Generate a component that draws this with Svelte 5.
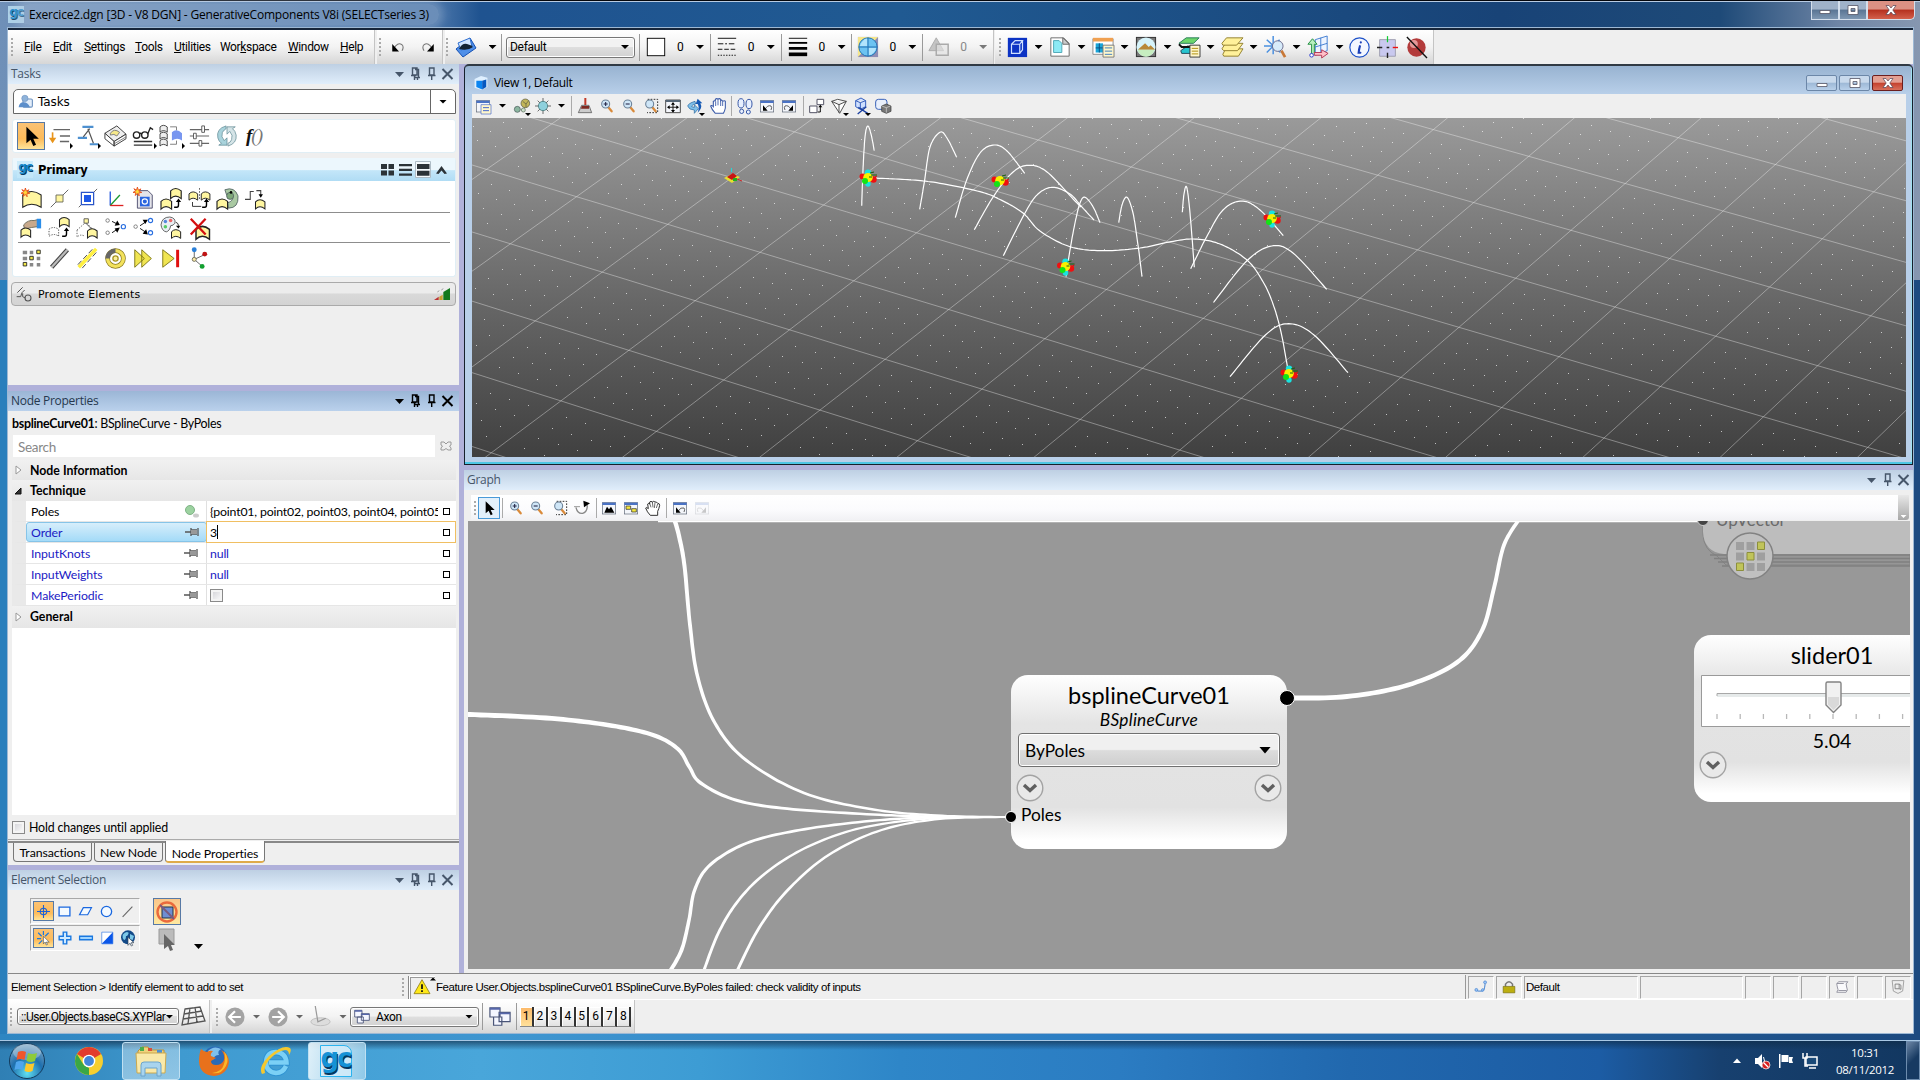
<script>
  // ---------- icon artwork, all on a 24 x 24 grid ----------
  const surf = (x, y, s = 1, f = '#fff6a0') =>
    `<path transform="translate(${x} ${y}) scale(${s})" d="M0 3Q5-2 11 3V11Q5 6 0 11Z" fill="${f}" stroke="#222" stroke-width="1.2"/>`;
  const lens = (inner) =>
    `<path d="M14 14l5 6" stroke="#d98a3a" stroke-width="3.4" stroke-linecap="round"/><circle cx="10" cy="9" r="6" fill="#cfe6f7" stroke="#6b8197" stroke-width="1.6"/>${inner}`;
  const win = (inner) =>
    `<rect x="2" y="4" width="20" height="17" fill="#f4f6fb" stroke="#5b6373"/><rect x="2" y="4" width="20" height="3.5" fill="#4a72c4"/>${inner}`;
  const star = (x, y) =>
    `<path transform="translate(${x} ${y})" d="M0-5L1.2-1.5 4-3 2-.3 5 1 1.7 1.5 2 5 0 2.4-2.5 4.5-1.8 1.4-5 1-2-.6-4-3.2-1-1.6Z" fill="#ffd83a" stroke="#e23b10" stroke-width=".9"/>`;
  const up = (x, y) => `<path d="M${x - 4} ${y + 9}h3q2 0 2-3v-4" fill="none" stroke="#000" stroke-width="1.6"/><path d="M${x - 2} ${y + 3}l3-4 3 4z"/>`;

  const icons = {
    level: '<path d="M2 14L16 3 22 13 9 22Z" fill="#4f8fe8" stroke="#1450b4"/><path d="M4 8L16 3 18 12 7 15Z" fill="#cfe4ff" stroke="#2f6fd0"/><path d="M5 14q3-6 8-5 4 1 6 3-5 4-14 2" fill="#123"/>',
    undo: '<path d="M5 14q5-9 11-5 3 3 0 8" fill="none" stroke="#777" stroke-width="1.4"/><path d="M3 8v10h9z"/>',
    redo: '<path d="M19 14q-5-9-11-5-3 3 0 8" fill="none" stroke="#777" stroke-width="1.4"/><path d="M21 8v10h-9z"/>',
    white: '<rect x="2.500" y="2.500" width="19" height="19" fill="#fff" stroke="#000"/>',
    style: '<g stroke="#000"><path d="M2 2.500h20"/><path d="M2 8.500h20" stroke-dasharray="6 2 2 2"/><path d="M2 14.500h20" stroke-dasharray="5 2"/><path d="M2 21h20" stroke-dasharray="1.500 1.500"/></g>',
    weight: '<path d="M2 2.500h20" stroke="#000"/><path d="M2 7.500h20" stroke="#000" stroke-width="2"/><path d="M2 13.500h20" stroke="#000" stroke-width="3"/><path d="M2 20h20" stroke="#000" stroke-width="4"/>',
    globe: '<path d="M1 1h22v22H1z" fill="#8d8db5"/><path d="M1 1h22L1 23z" fill="#f5e68c"/><circle cx="12" cy="12" r="10" fill="#6cc3f2" stroke="#1d6cae"/><path d="M12 2v20M2 12h20" stroke="#1d6cae"/><path d="M5 7q4-5 6-4v8H3zM13 13h8q-2 7-8 8z" fill="#c9efff" opacity=".75"/>',
    prio: '<path d="M9 2l8 14H1z" fill="#c4c4c4" stroke="#aaa"/><path d="M9 9h13v12H9z" fill="#e4e4e4" fill-opacity=".6" stroke="#aaa" stroke-width="1.600"/>',
    cube: '<path d="M2 2h21v21H2z" fill="#0c33c4"/><path d="M6 9h9v10H6zM6 9l4-4h8l-3 4M18 5v10l-3 4" fill="none" stroke="#cfe0ff" stroke-width="1.300"/>',
    page: '<path d="M2 2h14l6 6v14H2z" fill="#fff" stroke="#666"/><path d="M15 2l7 7h-7z" fill="#ccc" stroke="#666"/><path d="M5 5h6l3 3v10H5z" fill="#8deaf5" stroke="#4aa5b5"/>',
    table: '<path d="M1 3h22v17H1z" fill="#fff" stroke="#888"/><path d="M1 2h22v4H1z" fill="#f0a050"/><path d="M4 8h8v10H4z" fill="#1aa5d8"/><path d="M4 13h8M8 8v10" stroke="#0b4f80"/><path d="M12 10h12v13H12z" fill="#fff7cc" stroke="#777"/><path d="M14 13h8M14 16.500h8M14 20h8" stroke="#37b"/>',
    raster: '<path d="M1 1h22v22H1z" fill="#333"/><path d="M2 2h20v20H2z" fill="#777"/><circle cx="12" cy="12" r="10.400" fill="#d6f3fa"/><path d="M3 15l8-7 4 4 2-2 5 5z" fill="#b98838"/><path d="M2.500 15h19q-3 7.500-9.500 7.500T2.500 15" fill="#c7eec0"/>',
    models: '<path d="M3 16l7-5h13l-6 8H4z" fill="#26c4cf" stroke="#245"/><path d="M1 8l8-6h14l-6 6H3z" fill="#6cd66b" stroke="#275"/><path d="M1 9l3 3h11" fill="none" stroke="#111" stroke-width="2"/><path d="M13 10h11v13H13z" fill="#fff7cc" stroke="#333"/><path d="M15 13.500h7M15 16.500h7M15 19.500h7" stroke="#a80"/>',
    layers: '<g fill="#fff19a" stroke="#8d7b28"><path d="M2 20l3-6h19l-5 8H3z"/><path d="M1 14l4-6h19l-6 8H3z"/><path d="M1 8l5-6h18l-7 8H2z"/></g>',
    burst: '<path d="M10 0v20M0 11h18M3 4l15 14M17 4L3 18" stroke="#4a90e0" stroke-width="1.600"/><circle cx="15" cy="11" r="5.800" fill="#d7ebfa" stroke="#668"/><path d="M19 16l4 7" stroke="#c87838" stroke-width="3"/>',
    acs: '<path d="M9 4l13-4v16l-13 5zM15 2v16M9 12l13-4" fill="#edf4ff" stroke="#3a78d0"/><path d="M5 22V9H1l5-6 5 6H8v10" fill="#b8f0c0" stroke="#1b8b3a"/><path d="M8 18h8v-3l7 4-7 5v-3H8z" fill="#ffc0c8" stroke="#b03050"/><circle cx="5" cy="21" r="2" fill="#fff" stroke="#23c"/>',
    info: '<circle cx="12" cy="12" r="11" fill="#f3f7ff" stroke="#1b50c8" stroke-width="1.300"/><path d="M13.500 6v.2M12.500 10.500q-1 3-1.500 7.500h2" stroke="#1b40b8" stroke-width="2.400" fill="none" stroke-linecap="round"/>',
    target: '<path d="M3 3h18v19H3z" fill="#c9c9ef" stroke="#99a"/><path d="M12-1v7" stroke="#1c3" stroke-width="1.400"/><path d="M12 18v6M0 12h6M11 12h3" stroke="#222" stroke-width="1.600"/><path d="M18 12h6" stroke="#e11" stroke-width="1.600"/>',
    nosphere: '<circle cx="12" cy="12" r="10.500" fill="#b33b3b"/><circle cx="9" cy="8" r="4.500" fill="#f0b0b0" opacity=".8"/><path d="M1 0l23 24" stroke="#111" stroke-width="1.600"/>',
    person: '<rect x="8" y="8" width="15" height="13" rx="2" fill="#e4eefa" stroke="#6d92c0" stroke-width="1.800"/><circle cx="11" cy="7" r="5" fill="#8fb3da" stroke="#6d92c0"/><path d="M1 21q1-8 8-8t10 8z" fill="#5d8fcb"/>',
    arrow: '<path d="M7 2v18l4.500-4 3 7 3-1.500-3-6.500h6z"/>',
    listdn: '<path d="M6 5h18M13 12h11M13 18h10" stroke="#666" stroke-width="1.400"/><path d="M5 8v8" stroke="#e8941a" stroke-width="1.800"/><path d="M1 14h8l-4 6z" fill="#e8941a"/>',
    constr: '<path d="M7 2h12M2 14h10M15 21h9" stroke="#4d90d0" stroke-width="2.400"/><path d="M15 4l-7 9M13 4l6 16" stroke="#555" stroke-width="1.300"/>',
    book: '<path d="M1 9l13-8 10 9-13 8z" fill="#eee" stroke="#333"/><path d="M1 9v6l10 8v-5zM11 18v5l13-8v-5z" fill="#fff" stroke="#333"/><path d="M12 20l12-7" stroke="#777"/><path d="M7 9q4-6 10-1l-3 4q-3-3-7-1z" fill="#f5e88a" stroke="#777"/>',
    glasses: '<circle cx="5" cy="11" r="3.500" fill="none" stroke="#222" stroke-width="1.500"/><circle cx="14" cy="11" r="3.500" fill="none" stroke="#222" stroke-width="1.500"/><path d="M8 10q1-2 3 0M17 10l3-7 3 2" fill="none" stroke="#222" stroke-width="1.500"/><path d="M2 18h20M2 22h20" stroke="#333" stroke-width="1.500"/>',
    stack: surf(0, 0, .72, '#eee') + surf(0, 7.500, .72, '#eee') + surf(0, 15, .72, '#eee') + '<path d="M11 2h7v4M11 21h7v-4" stroke="#777" fill="none"/><path d="M13 8q5-5 11 1v8q-5-4-11 0z" fill="#7896f0"/>',
    sliders: '<path d="M2 5h21M2 12h21M2 20h21" stroke="#666" stroke-width="1.200"/><path d="M15 1h3v7h-3zM6 9h3v6H6zM12 17h3v6h-3z" fill="#fff" stroke="#555"/>',
    cycle: '<path d="M11 1Q0 4 2 14q1 4 4 6l-3 2h9v-8l-3 3Q5 13 7 8q2-3 4-4z" fill="#a9d3dc" stroke="#628a94" stroke-width=".800"/><path d="M13 23q10-3 9-12-1-5-4-7l3-2h-9v8l3-3q4 4 2 9-1 3-4 4z" fill="#d5e4e7" stroke="#628a94" stroke-width=".800"/>',
    surfnew: '<path d="M2 8Q12 0 23 8V22Q12 15 2 22Z" fill="#fff6a0" stroke="#222" stroke-width="1.200"/>' + star(5, 5),
    ptline: '<path d="M2 22L22 2" stroke="#555"/><path d="M8 8h8v8H8z" fill="#fff6a0" stroke="#665"/>',
    ptblue: '<path d="M2 22L23 1" stroke="#555"/><path d="M5 5h14v14H5z" fill="#fff" stroke="#2a55c8" stroke-width="1.400"/><path d="M8 8h8v8H8z" fill="#1e58e8"/>',
    axes: '<path d="M6 4v16" stroke="#2255dd" stroke-width="1.500"/><path d="M6 20L17 8" stroke="#1a9a30" stroke-width="1.500"/><path d="M6 20h15" stroke="#d22" stroke-width="1.500"/>',
    docnew: '<path d="M5 3h12l5 5v15H5z" fill="#e4e4ea" stroke="#446"/><path d="M8 10h11v11H8z" fill="#2a65e0"/><circle cx="13.500" cy="15.500" r="3" fill="none" stroke="#fff" stroke-width="1.300"/>' + star(5, 4),
    surfup: surf(11, 0, 1.1) + surf(0, 12, 1.1) + up(19, 13),
    surfmir: surf(0, 4, .9) + surf(14, 4, .9) + '<path d="M12 0v14" stroke="#555" stroke-dasharray="2 1.500"/><path d="M4 16v5h10" stroke="#222" fill="none"/>' + up(19, 13),
    radar: '<path d="M9 2q11-4 15 7 1 14-11 14l-1-6q7-2 6-8-4-5-7-1z" fill="#a9c9a2" stroke="#566"/><circle cx="15" cy="9" r="4" fill="#7ea878" stroke="#566"/><circle cx="16" cy="5" r="1.500"/>' + surf(0, 12, 1.1),
    branch: '<path d="M0 13h6V4h4M13 3h5v5" fill="none" stroke="#444" stroke-width="1.200"/><path d="M15.500 7h5L18 11z"/>' + surf(12, 13, .98),
    hand: '<path d="M3 9q5-6 12-5l4-1v8l-7 1-8 2z" fill="#c8a98c" stroke="#665"/><path d="M18 2h5v11h-5z" fill="#2a8de8"/>' + surf(0, 12, 1),
    ghost: surf(12, 0, 1) + '<path d="M0 14q5-4 11 0v8q-5-4-11 0z" fill="none" stroke="#444" stroke-dasharray="1.500 1.500"/>' + up(19, 13),
    ghost2: '<path d="M0 15l10-9 8 8M0 15v8q4-4 9-1" fill="none" stroke="#555" stroke-dasharray="1.500 1.500"/><path d="M10 7l7 7" stroke="#444"/><path d="M8 2h5v5H8z" fill="#fff6a0" stroke="#555"/>' + surf(12, 13, 1),
    merge: '<g fill="none" stroke="#777"><circle cx="3" cy="4" r="2"/><circle cx="3" cy="18" r="2"/></g><circle cx="21" cy="11" r="2.400" fill="none" stroke="#2a6fe0" stroke-width="1.300"/><path d="M8 5l6 3M8 18l6-4" stroke="#000"/><path d="M11 10l6-1-3-5zM11 13l6-1-3 6z"/>',
    split: '<circle cx="3" cy="11" r="2" fill="none" stroke="#777"/><g fill="none" stroke="#2a6fe0" stroke-width="1.300"><circle cx="20" cy="4" r="2.400"/><circle cx="20" cy="18" r="2.400"/></g><path d="M8 10l6-4M8 13l6 4" stroke="#000"/><path d="M11 3l6 0-3 5zM11 19l6 1-2-6z"/>',
    palette: '<path d="M0 9q1-9 10-9 7 1 6 7-2 3-5 3-1 6-5 7-5-1-6-8z" fill="#e9eef3" stroke="#555"/><circle cx="5" cy="5" r="2" fill="#58d"/><circle cx="11" cy="4" r="2" fill="#e66"/><circle cx="5" cy="11" r="2" fill="#5c6"/><path d="M17 6q3 1 3 4" fill="none" stroke="#222"/><path d="M17 10h5l-2 3z"/>' + surf(12, 14, .95),
    del: surf(8, 10, 1.4) + '<path d="M2 2l17 18M19 2L2 20" stroke="#d40f0f" stroke-width="2.600"/>',
    gridpts: '<g fill="#888"><path d="M2 3h5v4H2zM10 3h4v4h-4zM2 10h5v4H2zM18 10h4v4h-4zM10 17h4v4h-4zM18 17h4v4h-4z"/></g><g fill="#f4e94a" stroke="#222"><path d="M18 2.500h4v4h-4zM10 9.500h4v4h-4zM2.500 16.500h4v4h-4z"/></g>',
    bar: '<path d="M3 22L21 2" stroke="#444" stroke-width="5"/><path d="M3 22L21 2" stroke="#bbb" stroke-width="2.600"/>',
    bardash: '<path d="M2 22L22 1" stroke="#fff040" stroke-width="4"/><path d="M1 19L18 1M6 23L23 4" stroke="#333" stroke-dasharray="6 3"/>',
    ring: '<circle cx="12" cy="12" r="9" fill="none" stroke="#8a7a20" stroke-width="5.500"/><circle cx="12" cy="12" r="9" fill="none" stroke="#f3e25c" stroke-width="3.800"/><path d="M3 12a9 9 0 0 1 9-9" fill="none" stroke="#666" stroke-width="5"/><circle cx="12" cy="12" r="3" fill="#f9ef9a" stroke="#a89525" stroke-width="1.500"/>',
    ff: '<path d="M2 2l11 10-11 10zM10 2l11 10-11 10z" fill="#f0e552" stroke="#77700f"/>',
    step: '<path d="M2 2l13 10-13 10z" fill="#f0e552" stroke="#77700f"/><path d="M19 2v20" stroke="#e01010" stroke-width="3.400"/>',
    tree: '<path d="M6 13V4M6 13l11-5M6 13l8 7" stroke="#555"/><circle cx="6" cy="2" r="2.800" fill="#2a7fd8"/><circle cx="18" cy="7" r="2.800" fill="#c01414"/><circle cx="15" cy="21" r="2.800" fill="#12a030"/><circle cx="6" cy="13" r="2.300" fill="#fbe9a8" stroke="#665"/>',
    promote: '<path d="M2 10l8-8M1 16h6l2-6 4-4" stroke="#555" stroke-width="1.500" fill="none"/><circle cx="18" cy="18" r="4.500" fill="none" stroke="#555" stroke-width="1.600"/><path d="M10 11v5l4 2" stroke="#555" stroke-width="1.500" fill="none"/>',
    steps: '<path d="M0 21l7-5v5z" fill="#b33"/><path d="M8 21v-5l5-3v8z" fill="#c8a030"/><path d="M14 21V9l10-6v18z" fill="#147a1e"/><path d="M5 9l3-2M11 6l3-2" stroke="#777"/>',
    viewattr: win('<path d="M9 10h15v14H9z" fill="#fff7cc" stroke="#46c"/><path d="M12 14.500h9M12 19h9" stroke="#46c" stroke-width="1.500"/>'),
    gems: '<circle cx="5" cy="17" r="4.500" fill="#8cb6a0" stroke="#455"/><circle cx="17" cy="8" r="6.500" fill="#c2b65a" stroke="#554"/><path d="M13 5l5 4 4-5M18 9v5" stroke="#554" fill="none"/><circle cx="14" cy="18" r="3" fill="#c9dfc9" stroke="#565"/>',
    sun: '<path d="M12 0v24M0 12h24M4 4l16 16M20 4L4 20" stroke="#555" stroke-width="1.300"/><circle cx="12" cy="12" r="7" fill="#8ed0dc" stroke="#366"/>',
    brush: '<path d="M11 0h3v11h-3z" fill="#c23a2a"/><path d="M7 11h11l4 11H2z" fill="#ccc" stroke="#444"/><path d="M7 12h11v4H6z" fill="#7e2a22"/>',
    zin: lens('<path d="M7 9h6M10 6v6" stroke="#224" stroke-width="1.600"/>'),
    zout: lens('<path d="M7 9h6" stroke="#224" stroke-width="1.600"/>'),
    zwin: '<path d="M7 2h15v20H6" fill="none" stroke="#333" stroke-width="1.500" stroke-dasharray="2.500 2"/>' + lens(''),
    fit: '<path d="M1 3h22v19H1z" fill="#f4f6fb" stroke="#444" stroke-width="1.400"/><path d="M1 3h22v3H1z" fill="#567"/><path d="M12 8v12M5 14h14" stroke="#222" stroke-width="1.600"/><path d="M9 10l3-4 3 4zM9 18l3 4 3-4zM7 11l-4 3 4 3zM17 11l4 3-4 3z"/>',
    rotate: '<path d="M12 5Q2 8 1 12q2 6 10 6v5l6-7-6-6v4q-4 0-4-2 2-3 6-3z" fill="#7fc0ea" stroke="#25639c"/><path d="M16 22q8-7 4-14h3l-7-7-3 8h3q3 5 0 13z" fill="#1659b4"/>',
    pan: '<path d="M8 23Q3 18 1 12q1-2 4 1V5q2-2 3 0V2q2-2 4 0 2-2 4 0v2q2-2 3 1 3-2 4 0v10q-1 5-3 8z" fill="#fff" stroke="#3a5aa8" stroke-width="1.600"/><path d="M8.500 5v7M12 3v8M16 4v8M19 6v6" stroke="#3a5aa8" stroke-width="1.300"/>',
    panb: '<path d="M8 23Q3 18 1 12q1-2 4 1L4 6q2-2 3 0L7 3q2-2 4 0 2-2 4 0 2-1 4 2 3 0 3 3-1 5-3 9v6z" fill="#fff" stroke="#222" stroke-width="1.400"/><path d="M7 5l2 6M11 3l1 8M15 4l-1 8M19 6l-2 6" stroke="#222"/>',
    walk: '<g fill="#e8f0ff" stroke="#3a5aa8" stroke-width="1.500"><ellipse cx="6" cy="8" rx="4.500" ry="7"/><ellipse cx="7" cy="20" rx="3" ry="3.300"/><ellipse cx="18" cy="9" rx="4.500" ry="7"/><ellipse cx="17" cy="21" rx="3" ry="3"/></g>',
    vprev: win('<path d="M9 17q4-7 9-5 2 2 0 6" fill="none" stroke="#555" stroke-width="1.400"/><path d="M6 11v8h7z"/>'),
    vnext: win('<path d="M15 17q-4-7-9-5-2 2 0 6" fill="none" stroke="#555" stroke-width="1.400"/><path d="M18 11v8h-7z"/>'),
    copyv: '<path d="M1 12h11v10H1zM12 2h10v8h-10z" fill="#fff" stroke="#556" stroke-width="1.500"/><path d="M17 21v-8M13 21h4" stroke="#000" stroke-width="1.400" fill="none"/><path d="M14 14h6l-3-4z"/>',
    persp: '<path d="M1 5l9-3 13 3-10 18zM1 5l11 5 11-5M12 10v12" fill="#fff" stroke="#444" stroke-width="1.400"/>',
    clip: '<path d="M4 4l8-4 7 4v9l-8 4-7-4zM4 4l7 3 8-3M11 7v9" fill="#cfe0ff" stroke="#2a55b8" stroke-width="1.400"/><path d="M8 14l14 9M20 13L7 24" stroke="#1a3fa0" stroke-width="2"/>',
    mask: '<rect x="1" y="2" width="17" height="15" rx="4" fill="#e8effc" stroke="#3a62b8" stroke-width="1.500"/><path d="M10 12l7-3 7 3v8l-7 3-7-3z" fill="#777" stroke="#333"/><path d="M10 12l7 2.500 6-2.500M17 14.500V22" stroke="#ddd" fill="none"/>',
    orbit: '<path d="M3 11q2 10 10 9 7-2 7-12" fill="none" stroke="#888" stroke-width="2"/><path d="M14 1l10 4-9 6z"/><path d="M0 10h9" stroke="#999" stroke-width="1.500"/>',
    mount: win('<path d="M5 19l4-9 3 4 3-4 5 9z"/>'),
    nodes: win('<g fill="#f6e83e" stroke="#222"><path d="M4.500 9h7v5h-7zM13 13h7v5h-7z"/></g>'),
    cube2: '<path d="M1 5l11-5 11 3v16l-10 5-12-4z" fill="#dff0ff"/><path d="M4 8h10v15l-10-4z" fill="#0a84f0"/><path d="M14 8l7-2v13l-7 4z" fill="#0658c0"/>',
    cross: '<circle cx="12" cy="12" r="6" fill="none" stroke="#1a62d8" stroke-width="2"/><path d="M12 0v24M0 12h24" stroke="#1a62d8" stroke-width="2"/>',
    rect: '<path d="M2 4h20v16H2z" fill="#f4faff" stroke="#1a68e0" stroke-width="2.400"/>',
    para: '<path d="M8 5h15l-7 13H1z" fill="#f4faff" stroke="#1a68e0" stroke-width="2.200"/>',
    circ: '<circle cx="12" cy="12" r="9.500" fill="#f4faff" stroke="#1a68e0" stroke-width="2.400"/>',
    line: '<path d="M3 22L21 3" stroke="#666" stroke-width="2"/>',
    burst2: '<path d="M11 0v7M2 3l6 6M20 3l-6 6M0 13h7M3 22l6-6" stroke="#1a78e0" stroke-width="2"/><path d="M11 9v13l3-3 2 5 2-1-2-4h5z" fill="#fff" stroke="#345"/>',
    plus: '<path d="M9 2h6v7h7v6h-7v7H9v-7H2V9h7z" fill="#cfeaff" stroke="#1a78e0" stroke-width="2.400"/>',
    minus: '<path d="M1 9h22v6H1z" fill="#9fd4ff" stroke="#1a78e0" stroke-width="2.200"/>',
    half: '<path d="M3 2h19v20H3z" fill="#fff" stroke="#1a68e0"/><path d="M22 2v20H3z" fill="#0b57e8"/>',
    earth: '<circle cx="12" cy="11" r="10.500" fill="#134a88"/><path d="M4 7q5-6 9-3-1 5-4 5 0 6-3 6-3-3-2-8zM15 6l6 3-2 6-4-1z" fill="#7cc8e8"/><path d="M12 11v12l3-3 2 4 2-1-2-4h4z" fill="#fff" stroke="#345"/>',
    mesh: '<path d="M4 4l15-2 5 14-23 4zM3 9l18-3M2 14l20-3M9 3L7 19M14 2l2 15" fill="none" stroke="#555" stroke-width="1.300"/>',
    back: '<circle cx="12" cy="12" r="11.500" fill="#a3a3a3"/><path d="M19 12H7M12 5l-7 7 7 7" fill="none" stroke="#fff" stroke-width="2.600"/>',
    fwd: '<circle cx="12" cy="12" r="11.500" fill="#a3a3a3"/><path d="M5 12h12M12 5l7 7-7 7" fill="none" stroke="#fff" stroke-width="2.600"/>',
    ucs: '<ellipse cx="12" cy="18" rx="11" ry="4.500" fill="#ddd" stroke="#bbb"/><path d="M6 0l3 18 9-4" fill="none" stroke="#999" stroke-width="1.400"/>',
    wins: '<g fill="#f4f6ff" stroke="#4a5578" stroke-width="1.300"><path d="M1 2h11v10H1zM5 12h9v9H5zM11 7h12v10H11z"/></g><path d="M1 2h11v2H1zM11 7h12v2H11z" fill="#56a"/>',
    warn: '<path d="M12 1l12 21H0z" fill="#ffe818" stroke="#8a7a10" stroke-width="1.200"/><path d="M12 8v7M12 17v2.500" stroke="#111" stroke-width="2.600"/>',
    snap: '<circle cx="4" cy="17" r="2.500" fill="#9bc4f5" stroke="#37c"/><circle cx="19" cy="4" r="2.500" fill="#9bc4f5" stroke="#37c"/><path d="M6 19h8q4 0 5-12" fill="none" stroke="#37c" stroke-width="1.600"/><circle cx="15" cy="17" r="2.200" fill="#9bc4f5" stroke="#37c"/>',
    lock: '<path d="M6 11V7q6-8 12 0v4" fill="none" stroke="#777" stroke-width="2.600"/><path d="M2 11h20v11H2z" fill="#bcae10" stroke="#6a6208"/>',
    scroll: '<path d="M6 3h16q-5 3-2 9 3 6-1 9H3q4-4 1-9Q1 6 6 3zM3 6h12M6 18h14" fill="#fafafc" stroke="#8a8a98" stroke-width="1.500"/>',
    shield: '<path d="M2 1h20l-2 18-8 4-8-4z" fill="#eee" stroke="#999" stroke-width="1.500"/><path d="M7 7h7v8H7zM14 7l3 2v7l-3-1" fill="none" stroke="#777" stroke-width="1.400"/>'
  };

  // ---------- toolbars: [icon, cell width, drop mark, state] ----------
  const seg4 = ['cube', 'page', 'table', 'raster', 'models', 'layers', 'burst', 'acs'];
  const styleGroups = ['white', 'style', 'weight', 'globe', 'prio'];
  const taskTools = [['arrow', 0], ['listdn', 1], ['constr', 1], ['book', 0], ['glasses', 1], ['stack', 1], ['sliders', 0], ['cycle', 0]];
  const primary = [
    ['surfnew', 'ptline', 'ptblue', 'axes', 'docnew', 'surfup', 'surfmir', 'radar', 'branch'],
    ['hand', 'ghost', 'ghost2', 'merge', 'split', 'palette', 'del'],
    ['gridpts', 'bar', 'bardash', 'ring', 'ff', 'step', 'tree']
  ];
  const viewBar = [
    ['viewattr', 22], ['v', 17], ['gems', 21, 1], ['sun', 22], ['v', 15], ['|', 5], ['brush', 22], ['zin', 22], ['zout', 22],
    ['zwin', 22], ['fit', 22], ['rotate', 22, 1], ['pan', 23], ['|', 5], ['walk', 22], ['vprev', 22], ['vnext', 22], ['|', 6],
    ['copyv', 22], ['persp', 22, 1], ['clip', 22, 1], ['mask', 22]
  ];
  const graphBar = [
    ['arrow', 22, 0, 'on'], ['|', 5], ['zin', 21], ['zout', 22], ['zwin', 24], ['orbit', 20], ['|', 8], ['mount', 17], ['nodes', 27],
    ['panb', 18], ['|', 9], ['vprev', 18], ['vnext', 26, 0, 'off']
  ];
  const menus = [['', 'F', 'ile'], ['', 'E', 'dit'], ['', 'S', 'ettings'], ['', 'T', 'ools'], ['', 'U', 'tilities'], ['Wor', 'k', 'space'], ['', 'W', 'indow'], ['', 'H', 'elp']];
  const statusCells = [['snap', 26], ['lock', 26], ['Default', 114], ['', 103], ['', 26], ['', 26], ['', 26], ['scroll', 26], ['', 26], ['shield', 26]];
  const props = [['Order', '3'], ['InputKnots', 'null'], ['InputWeights', 'null'], ['MakePeriodic', '']];
  const polesValue = '{point01, point02, point03, point04, point05}';

  // ---------- ground grid: projective map fitted to surveyed nodes ----------
  const survey = [
    [0, 0, 731, 177], [-2, 0, 552, 124], [2, -4, 656.5, 431.3], [10, 1, 1763.6, 416.7], [8, 6, 1826.7, 118.7], [2, 2, 1038.3, 140],
    [5, -1, 1142.6, 368.7], [7, 0, 1400.5, 377.3], [-1, -2, 510.7, 244.3], [6, 2, 1418.3, 250], [9, 5, 1873.3, 192.3], [4, -3, 917.2, 440.3]
  ];
  function fitMap(pts) {
    const A = Array.from({ length: 8 }, () => Array(9).fill(0));
    for (const [u, v, px, py] of pts) {
      const x = px / 1000, y = py / 1000;
      for (const r of [[u, v, 1, 0, 0, 0, -u * x, -v * x, x], [0, 0, 0, u, v, 1, -u * y, -v * y, y]])
        for (let i = 0; i < 8; i++) for (let j = 0; j < 9; j++) A[i][j] += r[i] * r[j];
    }
    for (let i = 0; i < 8; i++) {
      let p = i;
      for (let k = i + 1; k < 8; k++) if (Math.abs(A[k][i]) > Math.abs(A[p][i])) p = k;
      [A[i], A[p]] = [A[p], A[i]];
      for (let k = 0; k < 8; k++) {
        if (k === i) continue;
        const f = A[k][i] / A[i][i];
        for (let j = i; j < 9; j++) A[k][j] -= f * A[i][j];
      }
    }
    return A.map((r, i) => r[8] / r[i]);
  }
  const H = fitMap(survey);
  const project = (u, v) => {
    const w = H[6] * u + H[7] * v + 1;
    return [(1000 * (H[0] * u + H[1] * v + H[2])) / w, (1000 * (H[3] * u + H[4] * v + H[5])) / w];
  };
  const inView = ([x, y]) => x > 465 && x < 1912 && y > 112 && y < 462;
  function buildGrid() {
    let lines = '', dots = '';
    const walk = (at) => {
      let open = false;
      for (let t = -12; t <= 18; t += 0.25) {
        const p = at(t);
        if (p[0] > 380 && p[0] < 2000 && p[1] > 60 && p[1] < 520) {
          lines += `${open ? 'L' : 'M'}${p[0].toFixed(1)} ${p[1].toFixed(1)}`;
          open = true;
        } else open = false;
      }
    };
    for (let k = -12; k <= 18; k++) {
      walk((t) => project(t, k));
      walk((t) => project(k, t));
    }
    for (let i = -60; i <= 90; i++)
      for (let j = -60; j <= 60; j++) {
        if (i % 5 === 0 || j % 5 === 0) continue;
        const p = project(i / 5, j / 5);
        if (inView(p)) dots += `M${Math.round(p[0])} ${Math.round(p[1])}h1v1h-1z`;
      }
    return { lines, dots };
  }
  const grid = buildGrid();

  // ---------- smooth curves through points ----------
  function sample(pts, n = 12) {
    const out = [];
    for (let i = 0; i < pts.length - 1; i++) {
      const a = pts[i - 1] ?? pts[i], b = pts[i], c = pts[i + 1], d = pts[i + 2] ?? c;
      for (let s = 0; s < n; s++) {
        const t = s / n;
        out.push([0, 1].map((k) => 0.5 * (2 * b[k] + (c[k] - a[k]) * t + (2 * a[k] - 5 * b[k] + 4 * c[k] - d[k]) * t * t + (3 * b[k] - a[k] - 3 * c[k] + d[k]) * t ** 3)));
      }
    }
    out.push(pts[pts.length - 1]);
    return out;
  }
  const join = (p) => p.map(([x, y]) => `${x.toFixed(1)} ${y.toFixed(1)}`).join('L');
  const curve = (pts) => 'M' + join(sample(pts));
  function ribbon({ pts, from, to }) {
    const s = sample(pts), l = [], r = [];
    s.forEach(([x, y], i) => {
      const p = s[Math.max(0, i - 1)], q = s[Math.min(s.length - 1, i + 1)];
      const dx = q[0] - p[0], dy = q[1] - p[1], m = Math.hypot(dx, dy) || 1;
      const w = (from + ((to - from) * i) / (s.length - 1)) / 2;
      l.push([x - (dy / m) * w, y + (dx / m) * w]);
      r.unshift([x + (dy / m) * w, y - (dx / m) * w]);
    });
    return `M${join([...l, ...r])}Z`;
  }

  const arcs = [
    [[861.7, 205.700], [863, 170], [865, 137], [867.7, 126], [871, 134], [874.3, 150.700]],
    [[919.7, 209.300], [924.5, 181], [930, 147], [940, 132.300], [947, 138], [956.7, 157.300]],
    [[955.3, 217.700], [966.7, 180], [980, 153], [994, 145], [1007, 151], [1024.7, 173.300]],
    [[974.3, 229.700], [993.3, 196.700], [1012, 173], [1028, 165.300], [1046.7, 171.700], [1075, 201], [1081, 207]],
    [[1003.3, 255.700], [1025, 213], [1038, 194], [1053, 187.300], [1070, 194], [1081, 206], [1094, 220]],
    [[1066, 276.700], [1070, 250], [1075, 223], [1080, 203], [1085, 197.300], [1093, 206.700], [1100, 222.700]],
    [[1118.7, 222.700], [1122, 205], [1127, 197.300], [1133, 213], [1138, 245], [1142, 276.700]],
    [[1182.3, 212.300], [1184, 194], [1186.7, 187.300], [1190, 213], [1194.3, 267.300]],
    [[1190.7, 268.700], [1206.7, 236.700], [1223, 210], [1241.7, 201], [1260, 210], [1283.3, 235.700]],
    [[1213.5, 302.500], [1246.7, 261], [1271.7, 246], [1293, 253], [1326.7, 289.300]],
    [[1230, 376.700], [1265.4, 335], [1288.7, 323.700], [1314, 335], [1348, 372.700]],
    [[870, 178], [905, 179.500], [936.7, 182.700], [980, 191.700], [1000, 199.500], [1023, 213], [1040, 231], [1070, 246.700], [1103, 250.700], [1140, 248], [1166.7, 242.500], [1193, 239], [1220, 244], [1247, 260], [1263, 281.700], [1273, 304], [1281, 332], [1288, 370]]
  ];
  const poles = [[868, 178, 1], [1000, 181, 0], [1065.5, 267, 1], [1272, 219, 1], [1289, 374, 1]];

  const wires = [
    { from: 4.5, to: 2, pts: [[674, 518], [679, 536], [684.5, 566], [690, 625], [697.6, 676.700], [714.9, 723], [745.9, 760], [804, 793], [873.3, 809.500], [942, 815.700], [1008, 817]] },
    { from: 5, to: 2, pts: [[466, 714.300], [546, 718], [607.7, 725], [653, 735], [678, 749], [689.4, 767], [700.7, 783], [735.6, 800], [787.2, 808.700], [873.3, 814.500], [940, 816.800], [1008, 817]] },
    { from: 4, to: 2, pts: [[669, 973], [681.6, 950], [689, 920], [694.7, 890], [710, 865], [747, 843], [800, 830], [869.4, 821], [930.6, 817.500], [1008, 817]] },
    { from: 3, to: 2, pts: [[703, 973], [718.4, 933], [738.8, 900], [767.3, 871.700], [808, 846.700], [861, 828], [930.6, 818.500], [1008, 817]] },
    { from: 3, to: 2, pts: [[736, 973], [759, 928], [787.8, 890], [828.6, 855], [881.6, 830], [940, 819], [1008, 817]] },
    { from: 5, to: 3.6, pts: [[1287, 698], [1347, 696.500], [1408, 685], [1457, 662.400], [1482, 630.600], [1494, 588], [1504, 545], [1520, 518]] }
  ];
  const ticks = [0, 1, 2, 3, 4, 5, 6, 7, 8];
</script>

{#snippet icon(name, size = 20)}
  <svg class="ic" width={size} height={size} viewBox="0 0 24 24">{@html icons[name]}</svg>
{/snippet}

{#snippet paneHead(title, dark = false, single = false)}
  <header class="pane" class:dark class:single>
    <span>{title}</span>
    <svg class="ic" width="60" height="16" viewBox="0 0 60 16" fill="none" stroke="currentColor" stroke-width="1.400">
      <path d="M1 6h9l-4.500 5z" fill="currentColor" stroke="none" transform={single ? 'translate(16 0)' : undefined} />
      {#if !single}<path d="M18.500 2h4.500v7h-4.500zM17 9.500h5M20.500 9.500V14M21 3.500h3.500V11M20 11.500h6M23.500 11.500V14" />{/if}
      <path d="M35.500 2h4.500v7h-4.500zM34 9.500h7.500M37.700 9.500V14" />
      <path d="M48.500 3l10 10M58.500 3L48.500 13" stroke-width="2" />
    </svg>
  </header>
{/snippet}

{#snippet bar(items)}
  {#each items as [name, w, drop, state]}
    <span class="cell {state ?? ''}" style:width="{w}px">
      {#if name === '|'}<i class="sep"></i>{:else if name === 'v'}<i class="tri"></i>{:else}{@render icon(name, 16)}{/if}
      {#if drop}<i class="mini"></i>{/if}
    </span>
  {/each}
{/snippet}

{#snippet chevron()}
  <svg class="ic" width="28" height="28" viewBox="0 0 28 28"><circle cx="14" cy="14" r="12.800" fill="#e9e9e9" stroke="#a3a3a3" stroke-width="1.400" /><path d="M8 11l6 5.500 6-5.500" fill="none" stroke="#606060" stroke-width="3.400" /></svg>
{/snippet}

{#snippet sysButtons()}
  <div class="sys">
    <span><svg class="ic" width="12" height="10" viewBox="0 0 12 10"><path d="M1 5.500h10v3H1z" fill="#fff" stroke="#556" stroke-width=".800" /></svg></span>
    <span><svg class="ic" width="12" height="10" viewBox="0 0 12 10"><path d="M1 .500h10v9H1zM4 3.500v3h4v-3z" fill="#fff" fill-rule="evenodd" stroke="#556" stroke-width=".800" /></svg></span>
    <span class="x"><svg class="ic" width="12" height="10" viewBox="0 0 12 10"><path d="M1 .500h3l2 2.500 2-2.500h3L7.800 5 11 9.500H8L6 7 4 9.500H1L4.200 5z" fill="#fff" stroke="#545" stroke-width=".700" /></svg></span>
  </div>
{/snippet}

<div class="screen">
  <div class="titlebar">
    <b class="gc small">gc</b>
    <span class="title">Exercice2.dgn [3D - V8 DGN] - GenerativeComponents V8i (SELECTseries 3)</span>
    {@render sysButtons()}
  </div>

  <div class="client">
    <div class="toolbars">
      <div class="seg menu">
        <i class="grip"></i>
        {#each menus as [a, u, b]}<span>{a}<u>{u}</u>{b}</span>{/each}
      </div>
      <div class="seg history"><i class="grip"></i>{@render icon('undo', 18)}{@render icon('redo', 18)}</div>
      <div class="seg attrs">
        <i class="grip"></i>
        <span class="cell lvl">{@render icon('level', 24)}</span>
        <span class="cell la"><i class="tri"></i></span><i class="sep tall"></i>
        <div class="combo dflt"><span>Default</span><i class="tri"></i></div>
        {#each styleGroups as g}
          <div class="group" class:dim={g === 'prio'}><i class="sep tall"></i>{@render icon(g, 22)}<span>0</span><i class="tri"></i></div>
        {/each}
      </div>
      <div class="seg models">
        <i class="grip"></i>
        {#each seg4 as g}<span class="cell pair">{@render icon(g, 22)}<i class="tri"></i></span>{/each}
        <span class="cell solo">{@render icon('info', 21)}</span><span class="cell solo">{@render icon('target', 21)}</span><span class="cell solo">{@render icon('nosphere', 21)}</span>
      </div>
    </div>

    <div class="work">
      <aside>
        <section class="tasks">
          {@render paneHead('Tasks')}
          <div class="taskcombo">{@render icon('person', 15)}<span>Tasks</span><em><i class="tri"></i></em></div>
          <div class="tooltray">
            {#each taskTools as [name, drop], i}
              <span class="cell t28" class:active={i === 0}>{@render icon(name, 22)}{#if drop}<i class="side"></i>{/if}</span>
            {/each}
            <span class="cell t28 fx"><b>f</b>()</span>
          </div>
          <div class="primary">
            <div class="phead">
              <b class="gc small">gc</b><strong>Primary</strong>
              <svg class="ic" width="70" height="18" viewBox="0 0 70 18" fill="#2c3338">
                <path d="M1 3h6v5H1zM8.500 3h5.500v5H8.500zM1 9.500h6v5H1zM8.500 9.500h5.500v5H8.500zM19 3h13v2.200H19zM19 7.800h13V10H19zM19 12.600h13v2.200H19z" />
                <path d="M35.500.500h15v16h-15z" fill="#f4f9fc" stroke="#aebcc6" /><path d="M37 3h12.500v5H37zM37 9.800h12.500v5H37z" />
                <path d="M56 12.500l5.500-7.500 5.500 7.500-2.500.500-3-3.500-3 3.500z" />
              </svg>
            </div>
            {#each primary as row}
              <div class="prow">{#each row as name}<span class="cell t28">{@render icon(name, 21)}</span>{/each}</div>
            {/each}
          </div>
          <div class="promote">{@render icon('promote', 16)}<span>Promote Elements</span>{@render icon('steps', 16)}</div>
        </section>

        <section class="nodeprops">
          {@render paneHead('Node Properties', true)}
          <p class="heading"><b>bsplineCurve01</b>: BSplineCurve - ByPoles</p>
          <div class="search"><span>Search</span><svg class="ic" width="12" height="12" viewBox="0 0 12 12"><path d="M1 2h3l2 2 2-2h3v3L9.500 6 11 8v2H8L6 8.500 4 10H1V8l1.500-2L1 5z" fill="none" stroke="#999" /></svg></div>
          <div class="tree">
            <div class="cat"><svg class="ic" width="10" height="10" viewBox="0 0 10 10"><path d="M3 1l5 4-5 4z" fill="#fff" stroke="#999" /></svg>Node Information</div>
            <div class="cat open"><svg class="ic" width="10" height="10" viewBox="0 0 10 10"><path d="M8 2v6H2z" fill="#333" stroke="#111" /></svg>Technique</div>
            <div class="prop black"><span class="name">Poles<svg class="ic" width="16" height="14" viewBox="0 0 16 14"><circle cx="7" cy="6" r="4.500" fill="#9cd2a0" stroke="#7fb386" /><ellipse cx="13" cy="11.500" rx="3" ry="2" fill="#ccc" /></svg></span><span class="val">{polesValue}</span><i class="box"></i></div>
            {#each props as [name, value], i}
              <div class="prop" class:sel={i === 0}>
                <span class="name">{name}<svg class="ic" width="16" height="10" viewBox="0 0 16 10"><path d="M1 5h6M7 1v8M7 3h6M7 7h6M14 1v8" stroke="#555" stroke-width="1.300" fill="none" /><path d="M7 3h6v4H7z" fill="#999" /></svg></span>
                <span class="val">{#if value}{value}{#if i === 0}<i class="caret"></i>{/if}{:else}<i class="check"></i>{/if}</span><i class="box"></i>
              </div>
            {/each}
            <div class="cat last"><svg class="ic" width="10" height="10" viewBox="0 0 10 10"><path d="M3 1l5 4-5 4z" fill="#fff" stroke="#999" /></svg>General</div>
          </div>
          <div class="hold"><i class="check"></i>Hold changes until applied</div>
          <nav><span class="t1">Transactions</span><span class="t2">New Node</span><span class="t3">Node Properties</span></nav>
        </section>

        <section class="select">
          {@render paneHead('Element Selection')}
          <div class="selbody">
            <div class="modes">
              <div>{#each ['cross', 'rect', 'para', 'circ', 'line'] as n, i}<span class="cell m21" class:active={i === 0}>{@render icon(n, 13)}</span>{/each}</div>
              <div>{#each ['burst2', 'plus', 'minus', 'half', 'earth'] as n, i}<span class="cell m21" class:active={i === 0}>{@render icon(n, n === 'earth' ? 16 : 14)}</span>{/each}</div>
            </div>
            <div class="extra">
              <span class="cell forbid"><svg class="ic" width="24" height="24" viewBox="0 0 24 24"><path d="M7 7h11v11H7z" fill="#6f8ed2" stroke="#234" /><circle cx="12" cy="12" r="9.500" fill="none" stroke="#ea6a3c" stroke-width="2.400" /><path d="M5 5l14 14" stroke="#7a5a80" stroke-width="2" /></svg></span>
              <svg class="ic" width="18" height="24" viewBox="0 0 18 24"><path d="M1 1h15v15H1z" fill="#bbb" stroke="#999" /><path d="M6 6v15l4-3 2 5 3-1-2-5h4z" fill="#666" /></svg>
            </div>
            <i class="tri big"></i>
          </div>
        </section>
      </aside>

      <main>
        <section class="view">
          <div class="vtitle">{@render icon('cube2', 14)}<span>View 1, Default</span>{@render sysButtons()}</div>
          <div class="vbar">{@render bar(viewBar)}</div>
          <svg class="scene" viewBox="472 118 1434 339">
            <defs><linearGradient id="ground" x1="0" y1="0" x2="0" y2="1"><stop offset="0" stop-color="#9a9a9a" /><stop offset=".54" stop-color="#676767" /><stop offset="1" stop-color="#404040" /></linearGradient></defs>
            <rect x="472" y="118" width="1434" height="339" fill="url(#ground)" />
            <path d={grid.lines} fill="none" stroke="#fff" stroke-opacity=".36" />
            <path d={grid.dots} fill="#fff" fill-opacity=".66" shape-rendering="crispEdges" />
            {#each arcs as a}<path d={curve(a)} fill="none" stroke="#fff" stroke-width="1.200" />{/each}
            <g><path d="M724 178l8-4 8 3-8 6z" fill="#e8e030" /><path d="M727 177l6-4 4 3-5 4z" fill="#c81414" /><path d="M733 178h4v3h-4z" fill="#20b020" /><path d="M731.500 168v4" stroke="#20d8d8" /><path d="M737 179l5 2" stroke="#d02020" /></g>
            {#each poles as [x, y, tall]}
              <g transform="translate({x} {y})">
                {#if tall}<ellipse cx="0" cy="-5.500" rx="3.200" ry="3" fill="#19e3e0" /><ellipse cx="0" cy="6" rx="2.700" ry="2.700" fill="#19e3e0" />{/if}
                <circle cx="-5.500" cy="-1.500" r="3" fill="#f01010" /><circle cx="5.500" cy="1.500" r="3.200" fill="#f01010" />
                <ellipse cx="0" cy="-.500" rx="4.800" ry="4.500" fill="#f7f000" /><circle cx="-3" cy="3" r="3" fill="#14e414" />
                <path d="M2-5l4-1M3-3l6 0M1-1l3 0" stroke="#186010" /><path d="M7-1l2-1" stroke="#e01010" />
              </g>
            {/each}
          </svg>
        </section>

        <section class="graph">
          {@render paneHead('Graph', false, true)}
          <div class="gbar"><div class="gtools"><i class="grip"></i>{@render bar(graphBar)}</div><div class="more"><i class="tri"></i></div></div>
          <div class="canvas">
            <svg class="wires" viewBox="468 521 1442 448">
              <path d="M658 521.500H1910" stroke="#fff" stroke-width="1.400" />
              {#each wires as w}<path d={ribbon(w)} fill="#fff" />{/each}
              <g stroke="#848484">
                <path d="M1703 521V535Q1704 550 1717 556L1726 565H1910V521Z" fill="#969696" stroke="#858585" />
                <path d="M1710 555H1910M1714 558.500H1910M1718 562H1910M1722 566H1910" stroke="#808080" stroke-width="1.300" />
                <path d="M1703 521V532Q1704 552 1724 554H1910V521Z" fill="#bdbdbd" stroke="none" />
              </g>
            </svg>
            <div class="upnode"><i class="port dimport"></i><span>UpVector</span></div>
            <svg class="ic badge" width="48" height="48" viewBox="0 0 48 48"><circle cx="24" cy="24" r="23" fill="#c0c0c0" stroke="#828282" stroke-width="1.500" /><g fill="#9f9f9f"><path d="M10 10h8v8h-8zM20.500 10h8v8h-8zM10 20.500h8v8h-8zM31 20.500h8v8h-8zM20.500 31h8v8h-8zM31 31h8v8h-8z" /></g><g fill="#c0c45a" stroke="#8c8f3c"><path d="M31.500 10h7v7.500h-7zM21 20.500h7V28h-7zM10.500 31h7v7.500h-7z" /></g></svg>

            <article class="node">
              <h2>bsplineCurve01</h2>
              <h3>BSplineCurve</h3>
              <div class="nodecombo"><span>ByPoles</span><i class="tri big"></i></div>
              <div class="chevs">{@render chevron()}{@render chevron()}</div>
              <p>Poles</p>
              <i class="port in"></i><i class="port out"></i>
            </article>

            <article class="node slider">
              <h2>slider01</h2>
              <svg class="track" width="260" height="52" viewBox="0 0 260 52">
                <path d="M.500.500h262v51H.500z" fill="#fff" stroke="#9a9a9a" /><path d="M16 22v-4h250v4z" fill="#e6eaea" /><path d="M16 21v-2.500h250" fill="none" stroke="#a8a8a8" />
                {#each ticks as t}<path d="M{16 + t * 23.200} 39v5" stroke="#b8b8b8" stroke-width="1.300" />{/each}
                <path d="M125 8.500q0-1.500 1.500-1.500h12q1.500 0 1.500 1.500V30l-7.500 7.500L125 30z" fill="#f1f1f1" stroke="#838383" stroke-width="1.400" /><path d="M127 22h11v7.500l-5.500 5.500-5.500-5.500z" fill="#d9d9d9" />
              </svg>
              <p class="num">5.04</p>
              <div class="chevs one">{@render chevron()}</div>
            </article>
          </div>
        </section>
      </main>
    </div>

    <footer class="status">
      <span class="prompt">Element Selection &gt; Identify element to add to set</span>
      <i class="grip"></i>
      <span class="warn">{@render icon('warn', 16)}<i class="upt"></i></span>
      <span class="msg">Feature User.Objects.bsplineCurve01 BSplineCurve.ByPoles failed: check validity of inputs</span>
      {#each statusCells as [k, w]}<span class="scell" style:width="{w}px">{#if icons[k]}{@render icon(k, 14)}{:else}{k}{/if}</span>{/each}
    </footer>

    <div class="bottombar">
      <div class="seg b1"><i class="grip"></i><div class="combo acsname"><span>::User.Objects.baseCS.XYPlar</span><i class="tri"></i></div>{@render icon('mesh', 24)}</div>
      <div class="seg b2">
        <i class="grip"></i>
        <span class="cell nav">{@render icon('back', 20)}<i class="tri grey"></i></span><span class="cell nav">{@render icon('fwd', 20)}<i class="tri grey"></i></span><span class="cell nav">{@render icon('ucs', 21)}<i class="tri grey"></i></span>
        <div class="combo axon">{@render icon('wins', 16)}<span>Axon</span><i class="tri"></i></div>
        <i class="sep tall"></i><span class="cell w33">{@render icon('wins', 22)}</span><i class="sep tall"></i>
        <div class="nums">{#each [1, 2, 3, 4, 5, 6, 7, 8] as n}<span class:on={n === 1}>{n}</span>{/each}</div>
      </div>
    </div>
  </div>

  <div class="taskbar">
    <svg class="ic orb" width="38" height="38" viewBox="0 0 38 38">
      <defs><radialGradient id="orb" cx=".5" cy=".85" r=".9"><stop offset="0" stop-color="#5fe0f2" /><stop offset=".5" stop-color="#1e6fae" /><stop offset="1" stop-color="#8fb0c8" /></radialGradient></defs>
      <circle cx="19" cy="19" r="17.500" fill="url(#orb)" stroke="#123a5c" /><ellipse cx="19" cy="10" rx="14" ry="8" fill="#fff" opacity=".3" />
      <path d="M10 10q4-2 8 0l-1.500 8q-4-2-8 0z" fill="#f0562a" /><path d="M20 11q4 2 9 0l-2 8q-4 2-8.500 0z" fill="#8ecb3a" /><path d="M8 20q4-2 8 0l-1.500 8q-4-2-8 0z" fill="#4fa6ee" /><path d="M18 21q4 2 8.500 0l-2 8q-4 2-8 0z" fill="#fdc92c" />
    </svg>
    <svg class="ic chrome" width="30" height="30" viewBox="0 0 30 30"><circle cx="15" cy="15" r="14" fill="#f6ce2f" /><path d="M15 15L2.900 8A14 14 0 0 1 27.100 8z" fill="#e23c2e" /><path d="M15 29A14 14 0 0 1 2.900 8l6.500 10.500L15 22z" fill="#3aa746" /><circle cx="15" cy="15" r="6.300" fill="#fff" /><circle cx="15" cy="15" r="4.900" fill="#4285d8" /></svg>
    <span class="task"><svg class="ic" width="36" height="32" viewBox="0 0 36 32"><path d="M5 6l4-4h6l2 3h14v22H5z" fill="#f0d27a" stroke="#b8923a" /><path d="M7 2h4v4H7z" fill="#4cae4c" /><path d="M15 3h4v3h-4z" fill="#d8503a" /><path d="M24 5h5v3h-5z" fill="#4a90d8" /><path d="M3 8h30l-1 20H4z" fill="#f9e9a9" stroke="#caa84e" /><path d="M8 31V20q0-3 3-3h14q3 0 3 3v11h-4v-8H12v8z" fill="#a8d4ee" stroke="#6aa4cc" /></svg></span>
    <svg class="ic fox" width="32" height="32" viewBox="0 0 32 32"><circle cx="17" cy="14" r="12.500" fill="#2a6ab8" /><path d="M10 6q6-6 13-2-4 2-2 6-5 0-6 5-4-3-5-9z" fill="#7fc0ec" /><path d="M3 4q3 3 6 3 3-2 6-1-3 3-2 5l5 2-5 3q0 4 5 4 6 0 8-5 1-6-3-10 8 4 8 12-2 13-15 14Q2 30 1 17 1 9 3 4z" fill="#e8711c" /><path d="M26 6q6 8 2 15-5 9-14 7 10-1 12-9 2-6 0-13z" fill="#fbb829" /></svg>
    <svg class="ic ie" width="34" height="32" viewBox="0 0 34 32"><path d="M27 21q-3 7-10 7-10-1-10-11Q8 7 17 7q10 1 10.500 10.500H10" fill="none" stroke="#2f93d2" stroke-width="6.500" /><path d="M27 21q-3 7-10 7-10-1-10-11Q8 7 17 7q10 1 10.500 10.500H10" fill="none" stroke="#7bd0f6" stroke-width="4.500" /><path d="M3 29Q-1 22 10 11 24-1 31 3q2 2-1 7 0-5-4-5-8 1-16 10-6 8-4 13z" fill="#f5c82e" /></svg>
    <span class="task on"><b class="gc large">gc</b></span>
    <div class="tray">
      <svg class="ic" width="90" height="20" viewBox="0 0 90 20" fill="#fff">
        <path d="M3 12l4-4.500L11 12z" /><path d="M25 7h3l4-4v14l-4-4h-3z" /><path d="M33.500 6q2 4 0 8" fill="none" stroke="#fff" /><circle cx="36" cy="14" r="4" fill="#d82020" stroke="#fff" stroke-width=".700" /><path d="M33.500 11.500l5 5" stroke="#fff" stroke-width="1.300" />
        <path d="M49 3h1.500v14H49zM51.500 4h7v7h-7zM59 6h4l-1 3 1 3h-4z" /><path d="M76 6h11v8H76z" fill="#1b4a78" stroke="#fff" stroke-width="1.500" /><path d="M73 2v5h4V2M75 7v8h3M79 17h7" stroke="#fff" stroke-width="1.500" fill="none" />
      </svg>
      <div class="clock"><span>10:31</span><span>08/11/2012</span></div>
      <i class="showdesk"></i>
    </div>
  </div>
</div>

<style>
  :global(body) { margin: 0; background: #16345c; }
  .screen { width: 1920px; height: 1080px; overflow: hidden; display: flex; flex-direction: column; box-sizing: border-box; font: 12px 'Open Sans', sans-serif; color: #000;
    background: linear-gradient(90deg, #2a7fbc 0, #2a7fbc 8px, transparent 8px, transparent 1912px, #1c4a80 1912px) 0 280px / 1920px 754px no-repeat, linear-gradient(90deg, #2f86c2, #3f96d0 500px, #2b7cc2 1100px, #1c4a80 1900px) 0 1034px / 1920px 46px no-repeat, linear-gradient(90deg, #6f90b8, #3d6ba2 450px, #1f5390 480px, #205a92 900px, #184377 1500px, #1e4a78 1720px, #7086a6 1840px, #8697b0); }
  .screen * { box-sizing: border-box; }
  .screen i { display: block; flex: none; }
  .ic { display: block; flex: none; overflow: visible; }
  .wires, .scene, .track { overflow: hidden; }
  .titlebar { height: 28px; flex: none; border-top: 1px solid #05070c; box-shadow: inset 0 1px #b8cbe2; display: flex; align-items: center; padding-left: 8px; }
  .title { padding: 2px 10px; margin-left: -5px; letter-spacing: -.2px; white-space: nowrap; border-radius: 10px; background: rgb(180 198 220 / .38); box-shadow: 0 0 8px 5px rgb(180 198 220 / .38); }
  .gc { font: bold 16px/17px 'DejaVu Sans', sans-serif; color: #1788cc; letter-spacing: -1px; text-shadow: 1px 1px #06395e; background: rgb(195 232 250 / .75); }
  .gc.small { width: 16px; height: 17px; font-size: 12px; line-height: 13px; text-align: center; }
  .sys { margin-left: auto; display: flex; }
  .sys span { height: 19px; display: grid; place-items: center; border: 1px solid #d4dfec; border-top: 0; background: linear-gradient(#9fb2c9 45%, #5a7594 50%, #7e97b2); }
  .sys .x { background: linear-gradient(#dc9184 45%, #b5301f 50%, #d3604c); }
  .titlebar .sys { align-self: flex-start; margin-top: 0; margin-right: 5px; }
  .titlebar .sys span { width: 28px; } .titlebar .sys .x { width: 48px; border-bottom-right-radius: 5px; }
  .client { width: 1905px; height: 1005px; flex: none; margin-left: 8px; background: #efefef; border-top: 2px solid #17263a; display: flex; flex-direction: column; outline: 1px solid #9db8d4; }
  .toolbars { height: 34px; flex: none; display: flex; font-family: Roboto, sans-serif; }
  .seg { height: 34px; display: flex; align-items: center; background: linear-gradient(#fff, #f3f3f3 50%, #d6d6d6); border-right: 1px solid #c4c4c4; margin-right: 2px; flex: none; }
  .grip { width: 2px; height: 18px; background: repeating-linear-gradient(#aaa 0 2px, transparent 2px 4px); }
  .menu { width: 367px; display: grid; grid-template-columns: 16px 29px 31px 51px 39px 46px 68px 52px 30px; letter-spacing: -.35px; font-size: 12px; }
  .menu .grip { margin-left: 3px; }
  .history { width: 66px; padding-left: 2px; } .history .ic { margin-left: 9px; } .history .ic + .ic { margin-left: 10px; }
  .attrs { width: 549px; padding-left: 1px; margin-right: 1px; }
  .cell { position: relative; height: 100%; display: flex; flex: none; align-items: center; justify-content: center; }
  .lvl { width: 36px; } .la { width: 17px; }
  .screen .tri { width: 8px; height: 4px; background: #000; clip-path: polygon(0 0, 100% 0, 50% 100%); }
  .screen .tri.big { width: 12px; height: 7px; } .screen .tri.grey { background: #666; }
  .sep { width: 1px; height: 20px; background: #aaa; } .sep.tall { height: 27px; background: #9a9a9a; }
  .combo { height: 21px; border: 1px solid #777; border-radius: 3px; background: linear-gradient(#f2f2f2 45%, #dedede 50%, #d2d2d2); display: flex; align-items: center; padding: 0 5px 0 3px; box-shadow: inset 0 0 0 1px #fff; white-space: nowrap; }
  .combo .tri { margin-left: auto; }
  .dflt { width: 129px; margin: 0 4px 0 4px; letter-spacing: -.3px; }
  .group { width: 71px; height: 100%; display: flex; align-items: center; } .group .ic { margin-left: 5px; } .group > span { width: 8px; margin-left: 10px; } .group .tri { margin-left: 11px; }
  .group.dim { color: #888; } .group.dim .tri { opacity: .5; }
  .models { width: 439px; padding-left: 4px; }
  .pair { width: 43px; gap: 7px; padding-left: 3px; } .solo { width: 28.500px; }
  .work { height: 909px; flex: none; display: flex; background: #b0b1da; }
  aside { width: 451px; flex: none; display: flex; flex-direction: column; }
  aside section { background: #efefef; }
  .pane { height: 20px; flex: none; display: flex; align-items: center; justify-content: space-between; padding: 0 5px 0 3px; color: #46566a; background: linear-gradient(#bed0e3, #e0eefb); letter-spacing: -.28px; line-height: 20px; }
  .pane.single { padding-right: 3px; }
  .pane.dark { color: #26384e; background: linear-gradient(#9bb6d6, #bad1ec); } .pane.dark .ic { color: #000; }
  .tasks { height: 321px; margin-bottom: 6px; }
  .taskcombo { height: 25px; margin: 5px 3px 0 5px; background: #fff; border: 1px solid #666; border-radius: 5px 5px 0 0; display: flex; align-items: center; padding-left: 4px; font: 12px 'DejaVu Sans', sans-serif; letter-spacing: -.1px; }
  .taskcombo span { margin-left: 5px; } .taskcombo em { margin-left: auto; width: 25px; height: 100%; border-left: 1px solid #666; display: grid; place-items: center; }
  .tooltray { height: 34px; margin: 5px 3px 0 4px; background: #fff; border: 1px solid #e0eef5; border-radius: 3px; display: flex; align-items: center; padding-left: 4px; }
  .t28 { width: 28px; height: 28px; }
  .active { background: linear-gradient(#fbc377, #fdbb5a 60%, #ffe9a0); outline: 1px solid #5779a5; outline-offset: -1px; }
  .screen .side { position: absolute; right: 0; bottom: 1px; width: 3px; height: 6px; background: #000; clip-path: polygon(0 0, 100% 50%, 0 100%); }
  .screen .mini { position: absolute; right: 1px; bottom: 1px; width: 6px; height: 3px; background: #000; clip-path: polygon(0 0, 100% 0, 50% 100%); }
  .fx { font: italic 19px 'Liberation Serif', serif; color: #777; letter-spacing: -1px; padding-right: 2px; } .fx b { color: #111; }
  .primary { height: 119px; margin: 5px 3px 0 4px; background: #fff; border-radius: 3px; border: 1px solid #e0eef5; border-top: 0; }
  .phead { height: 23px; display: flex; align-items: center; padding: 0 5px 0 4px; background: linear-gradient(#ecf7fd 50%, #c3e6f9 55%, #b0dcf4); font: 12px 'DejaVu Sans', sans-serif; }
  .phead strong { margin-left: 5px; font-size: 11.500px; letter-spacing: -.2px; } .phead .ic { margin-left: auto; }
  .prow { height: 30px; margin: 0 5px; display: flex; align-items: center; border-bottom: 1px solid #8d8d8d; } .prow:nth-child(2) { height: 32px; padding-top: 3px; } .prow:last-child { border: 0; }
  .prow .t28:first-child { margin-left: -1px; }
  .promote { height: 24px; margin: 5px 3px 0 3px; display: flex; align-items: center; padding: 0 5px 0 4px; border: 1px solid #aaa; border-radius: 4px; background: linear-gradient(#ececec 45%, #d9d9d9 50%, #d3d3d3); font: 11px 'DejaVu Sans', sans-serif; letter-spacing: .1px; }
  .promote span { margin-left: 6px; margin-right: auto; }
  .nodeprops { height: 474px; margin-bottom: 5px; font-family: Lato, sans-serif; }
  .nodeprops .heading { letter-spacing: -.28px; }
  .pane { font-family: 'Open Sans', sans-serif; }
  .heading { margin: 0; height: 24px; line-height: 25px; padding-left: 4px; font-size: 12.400px; white-space: nowrap; }
  .search { margin: 0 3px 0 5px; height: 22px; display: flex; align-items: center; justify-content: space-between; padding-right: 4px; color: #888; font-size: 13.500px; letter-spacing: -.3px; }
  .search span { width: 422px; height: 22px; line-height: 24px; padding-left: 5px; background: #fff; }
  .tree { height: 355px; margin: 3px 3px 0 4px; background: #fff; font-size: 12.300px; }
  .cat { height: 20px; background: linear-gradient(#f1f1f1, #e6e6e6); display: flex; align-items: center; gap: 7px; padding-left: 1px; font-weight: bold; } .cat.open { height: 21px; } .cat.last { height: 22px; padding-bottom: 1px; }
  .prop { height: 21px; display: flex; align-items: center; border-bottom: 1px solid #e6e6e6; border-left: 14px solid #e9e9e9; color: #1b1bc4; position: relative; } .prop.black { color: #000; }
  .name { width: 181px; height: 100%; display: flex; align-items: center; justify-content: space-between; padding: 0 7px 0 5px; border-right: 1px solid #e0e0e0; flex: none; letter-spacing: -.08px; }
  .sel .name { background: linear-gradient(#d7eefb, #a4dbf8); border: 1px solid #86c4e8; border-radius: 3px; padding: 0 6px 0 4px; }
  .val { width: 231px; overflow: hidden; white-space: nowrap; padding-left: 3px; display: flex; align-items: center; letter-spacing: -.17px; }
  .sel .val { outline: 1.500px solid #f0bf62; color: #000; width: 248px; margin-right: -17px; height: 20px; }
  .screen .caret { width: 1px; height: 14px; background: #000; }
  .box { width: 7px; height: 7px; border: 1px solid #000; margin-left: 5px; background: #fff; }
  .check { width: 13px; height: 13px; border: 1px solid #8a8a8a; background: linear-gradient(135deg, #cfcfd4, #fff); box-shadow: inset 0 0 0 2px #f4f4f4; }
  .hold { height: 25px; display: flex; align-items: center; gap: 4px; padding-left: 4px; border-bottom: 1px solid #aaa; font-size: 12.400px; letter-spacing: -.17px; }
  nav { height: 24px; margin-top: 1px; border-top: 2px solid #888; display: flex; padding-left: 5px; font-size: 12.300px; letter-spacing: -.1px; }
  nav span { height: 19px; line-height: 20px; border: 1px solid #777; border-top: 0; border-radius: 0 0 4px 4px; text-align: center; margin-right: 2px; white-space: nowrap; }
  .t1 { width: 79px; } .t2 { width: 69px; } nav .t3 { width: 100px; height: 22px; line-height: 25px; background: #fff; border-bottom: 2px solid #dfab4a; margin-top: -2px; }
  .select { height: 103px; }
  .selbody { display: flex; padding: 8px 0 0 22px; }
  .modes div { display: flex; width: 110px; height: 26px; border: 1px solid #a8a8a8; border-right-color: #fff; border-bottom-color: #fff; padding: 2px 0 0 2px; margin-bottom: 1px; }
  .m21 { width: 21px; height: 20px; } .extra { margin-left: 13px; display: flex; flex-direction: column; align-items: center; gap: 3px; } .forbid { width: 28px; height: 27px; background: linear-gradient(#f9c68a, #ffe9a0); border: 1px solid #5779a5; }
  .selbody > .tri.big { margin: 46px 0 0 13px; width: 9px; height: 5px; }
  main { width: 1449px; margin-left: 5px; flex: none; display: flex; flex-direction: column; }
  .view { height: 401px; border: 1px solid #15202c; border-top: 2px solid #303a44; border-radius: 5px 5px 0 0; box-shadow: inset 0 -2px #4dc6e4, inset -1px 0 #9fe0ef; padding-left: 7px; display: flex; flex-direction: column; width: 1449px; background: linear-gradient(#98b3d1, #b8cfe9 28px); }
  .vtitle { height: 28px; flex: none; display: flex; align-items: center; padding: 5px 9px 0 2px; letter-spacing: -.32px; } .vtitle span { margin-left: 6px; } .vtitle .sys { gap: 2px; }
  .vtitle .sys span { width: 31px; height: 16px; margin-left: 0; border: 1px solid #6c87a8; border-radius: 2px; background: linear-gradient(#c8d9ec 45%, #9db8d6 50%, #b8d0ea); } .vtitle .sys .x { border-color: #6c1e1e; background: linear-gradient(#e3a093 45%, #c4402d 50%, #d8705c); }
  .vbar { width: 1434px; height: 24px; flex: none; background: #efefef; display: flex; align-items: center; padding-bottom: 1px; }
  .scene { display: block; width: 1434px; height: 339px; flex: none; }
  .graph { height: 503px; margin-top: 5px; background: #efefef; }
  .gbar { height: 31px; padding: 5px 4px 0 7px; display: flex; }
  .gtools { flex: 1; height: 25px; display: flex; align-items: center; background: linear-gradient(#fff, #fbfbfd 60%, #f1f1f4); padding-left: 3px; } .gtools .grip { height: 14px; margin-right: 2px; }
  .on.cell { outline: 1px solid #4a9ad8; outline-offset: -1px; background: #e3f0fb; height: 22px; } .off { opacity: .2; }
  .more { width: 11px; height: 25px; background: linear-gradient(#e8e8e8, #a8a8a8); border-radius: 0 0 3px 0; display: flex; align-items: flex-end; justify-content: center; padding-bottom: 2px; } .screen .more .tri { background: #fff; width: 6px; height: 3px; }
  .canvas { position: relative; overflow: hidden; width: 1442px; height: 448px; margin-left: 4px; background: #989898; font-family: Lato, sans-serif; }
  .wires { display: block; width: 1442px; height: 448px; }
  .node { position: absolute; left: 543px; top: 154px; width: 276px; height: 174px; border-radius: 17px; background: linear-gradient(#fff, #e4e4e4 28%, #e2e2e2 76%, #fff 95%); }
  .node h2 { margin: 0; font-weight: 400; font-size: 23.500px; line-height: 40px; height: 36px; text-align: center; }
  .node h3 { margin: 0; font-weight: 400; font-style: italic; font-size: 17.300px; letter-spacing: .25px; line-height: 18px; height: 22px; text-align: center; }
  .nodecombo { margin: 0 7px; height: 34px; border: 1.500px solid #707070; border-radius: 4px; box-shadow: inset 0 0 0 1px #fff; background: linear-gradient(#f0f0f0 48%, #dcdcdc 52%, #cecece); display: flex; align-items: center; justify-content: space-between; padding: 0 8px 0 6px; font-size: 17.300px; }
  .chevs { display: flex; justify-content: space-between; padding: 7px 5px 0; }
  .node p { margin: 0; font-size: 17.300px; line-height: 25px; padding-left: 10px; }
  .port { position: absolute; border-radius: 50%; background: #000; border: 1.500px solid #fff; }
  .port.in { width: 12px; height: 12px; left: -6px; top: 136px; } .port.out { width: 16px; height: 16px; right: -8px; top: 15px; }
  .node.slider { left: 1226px; top: 114px; width: 276px; height: 167px; } .node.slider h2 { height: 40px; line-height: 40px; }
  .track { display: block; margin: 0 0 0 7px; width: 260px; height: 52px; } .node p.num { padding: 0; text-align: center; font-size: 19.500px; line-height: 28px; height: 24px; } .chevs.one { padding-top: 0; margin-top: 0; }
  .upnode { position: absolute; left: 1234px; top: -12px; width: 220px; height: 30px; font-size: 17px; line-height: 22px; color: #6b6b6b; padding-left: 14px; } .dimport { left: -5px; top: 5px; width: 12px; height: 12px; background: #444; border-color: #ccc; }
  .badge { position: absolute; left: 1258px; top: 11px; }
  .status { height: 27px; flex: none; border-top: 1px solid #888; border-bottom: 1px solid #fff; display: flex; align-items: center; font-family: 'Liberation Sans', sans-serif; font-size: 11.500px; letter-spacing: -.43px; white-space: nowrap; padding-top: 1px; }
  .prompt { width: 394px; padding-left: 3px; } .warn { width: 27px; height: 23px; margin-left: 4px; border-left: 1px solid #888; box-shadow: inset 1px 1px #fff, inset 2px 2px #999; display: flex; align-items: center; padding-left: 5px; position: relative; }
  .screen .upt { position: absolute; right: -1px; top: 2px; width: 6px; height: 3px; background: #000; clip-path: polygon(50% 0, 100% 100%, 0 100%); }
  .msg { margin-left: 1px; width: 1030px; border-right: 1px solid #999; height: 24px; line-height: 24px; }
  .scell { height: 23px; margin-left: 2px; border: 1px solid #a5a5a5; border-right-color: #fff; border-bottom-color: #fff; display: flex; align-items: center; padding-left: 1px; flex: none; } .scell .ic, .scell :global(.ic) { margin-left: 4px; }
  .bottombar { height: 33px; display: flex; flex: none; font-family: Roboto, sans-serif; letter-spacing: -.3px; }
  .bottombar .seg { height: 33px; } .b1 { width: 202px; padding-left: 2px; } .b2 { width: 423px; padding-left: 4px; }
  .combo { flex: none; } .acsname { width: 162px; height: 17px; margin: 0 2px 0 5px; font-size: 12px; } .b1 .acsname { letter-spacing: -.42px; }
  .nav { width: 43px; gap: 8px; } .nav:first-of-type { margin-left: 3px; } .axon { width: 129px; margin-left: 0; margin-right: 3px; height: 20px; } .axon span { margin-left: 6px; } .w33 { width: 33px; }
  .nums { display: flex; margin-left: 3px; } .nums span { width: 13.900px; height: 20px; line-height: 19px; text-align: center; border-right: 2px solid #333; border-bottom: 1px solid #888; box-shadow: inset 1px 1px #fff; } .nums .on { background: linear-gradient(#fcb868, #ffe09a); }
  .taskbar { height: 40px; flex: none; margin-top: 7px; display: flex; align-items: center; border-top: 1px solid #a9c8e4;
    background: linear-gradient(#0f2c48aa, transparent 9px), linear-gradient(28deg, transparent 400px, rgb(255 255 255 / .14) 470px, transparent 500px) 900px 0 / 300px 40px no-repeat, linear-gradient(90deg, #2f7fb4, #3f9ad0 180px, #49a6da 480px, #3d9cd4 700px, #2e86c8 900px, #2b7cc2 1120px, #2168ae 1350px, #1c5ca4 1600px, #17406f 1720px, #123760); }
  .orb { margin-left: 8px; } .chrome { margin-left: 28px; }
  .task { width: 58px; height: 38px; display: grid; place-items: center; margin-left: 18px; border: 1px solid #bfe0f2; border-radius: 3px; background: linear-gradient(rgb(255 255 255 / .35), rgb(220 240 250 / .5)); } .task.on { margin-left: 15px; background: linear-gradient(100deg, rgb(240 249 253 / .9), rgb(175 218 240 / .7)); }
  .fox { margin-left: 18px; } .ie { margin-left: 29px; }
  .gc.large { width: 32px; height: 32px; font-size: 26px; line-height: 24px; letter-spacing: -2px; margin-left: -3px; background: rgb(214 238 250 / .8); border: 1.500px solid #2bb3ef; border-radius: 0 8px 0 0; text-shadow: 1px 2px #053860; color: #1692d6; }
  .tray { margin-left: auto; display: flex; align-items: center; height: 100%; color: #fff; } .clock { width: 88px; padding-left: 6px; margin-left: -2px; display: flex; flex-direction: column; text-align: center; line-height: 17px; font-size: 11.500px; letter-spacing: -.3px; }
  .showdesk { width: 14px; height: 39px; border: 1px solid #6d8cae; background: linear-gradient(135deg, #6c86a5, #173a62 50%); }
</style>
